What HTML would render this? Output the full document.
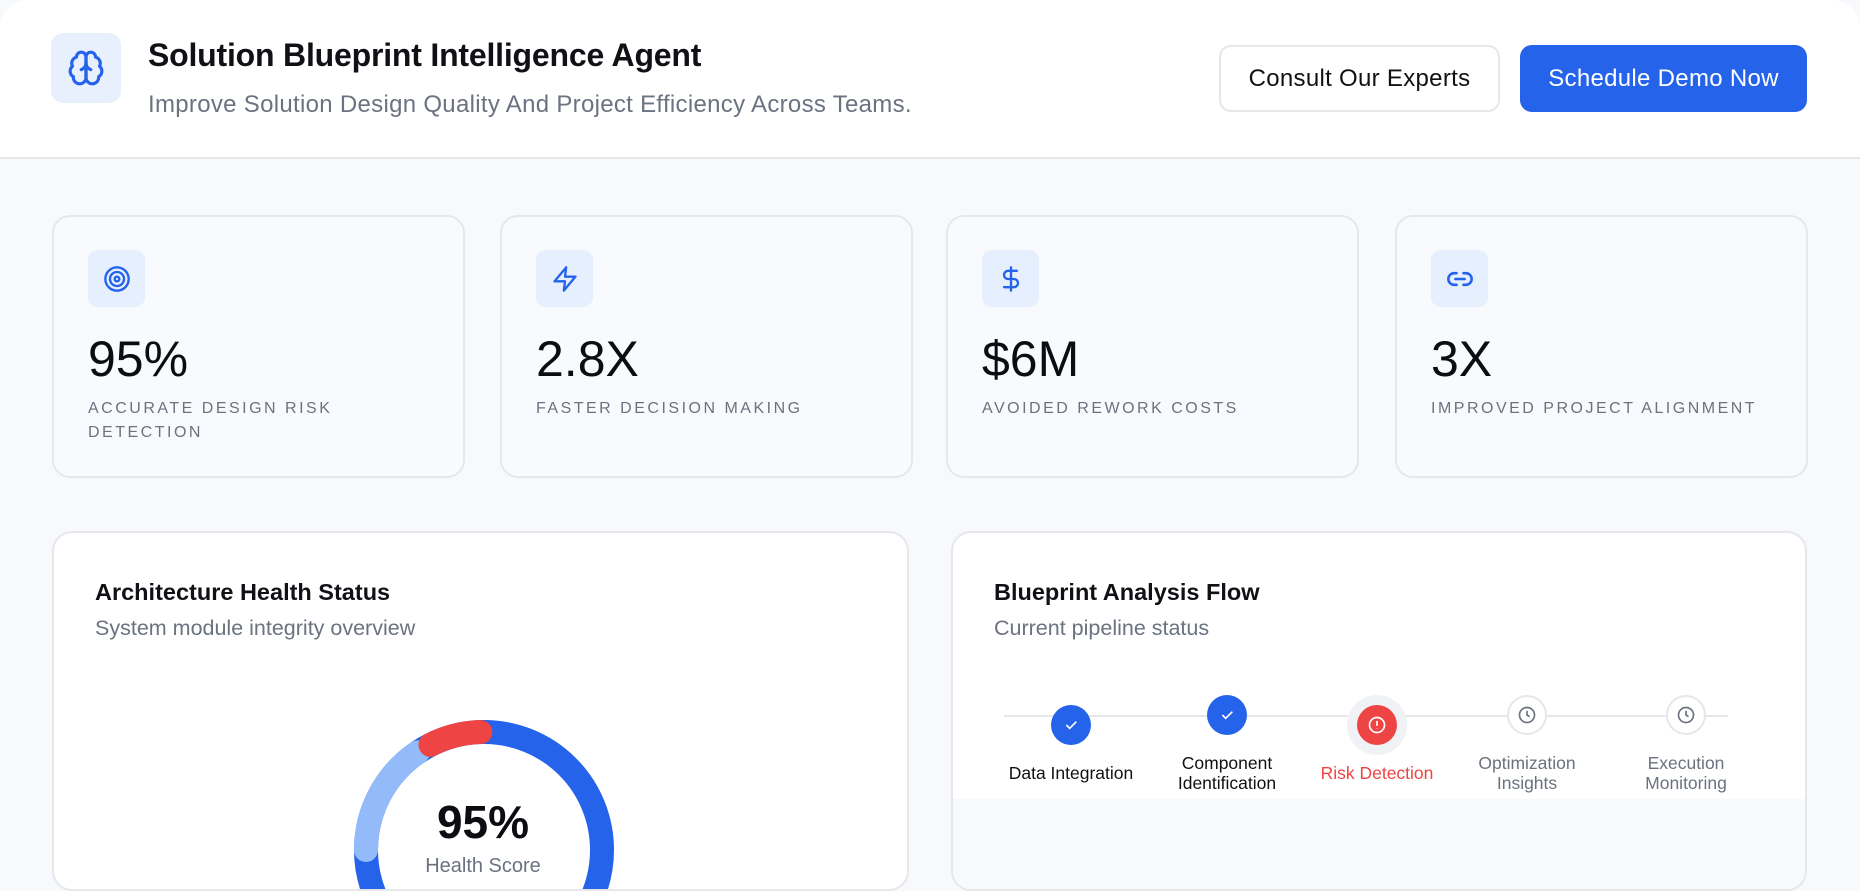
<!DOCTYPE html>
<html><head><meta charset="utf-8"><style>
*{box-sizing:border-box;margin:0;padding:0}
body{width:1860px;height:876px;overflow:hidden;background:#f8f9fc;font-family:"Liberation Sans",sans-serif;position:relative}
.hdr{position:absolute;left:0;top:0;width:1860px;height:159px;background:#fff;border-bottom:2px solid #e5e7eb;border-top-left-radius:28px;border-top-right-radius:28px}
.logo{position:absolute;left:51px;top:33px;width:70px;height:70px;border-radius:12px;background:#e8f0fe;display:flex;align-items:center;justify-content:center}
.t1{position:absolute;left:148px;top:37px;font-size:32px;font-weight:bold;color:#0f1115;letter-spacing:-0.2px}
.t2{position:absolute;left:148px;top:91px;font-size:24px;color:#6b7280;letter-spacing:0.3px}
.btn{position:absolute;top:45px;height:67px;border-radius:12px;font-size:24px;display:flex;align-items:center;justify-content:center;letter-spacing:0.3px}
.b1{left:1219px;width:281px;border:2px solid #e5e7eb;background:#fff;color:#111}
.b2{left:1520px;width:287px;background:#2563eb;color:#fff}
.card{position:absolute;top:215px;height:263px;width:413px;border:2px solid #e5e7eb;border-radius:18px;background:#f9fafd}
.ib{position:absolute;left:34px;top:33px;width:57px;height:57px;border-radius:10px;background:#e6effd;display:flex;align-items:center;justify-content:center}
.num{position:absolute;left:34px;top:113px;font-size:50px;color:#0b0d12}
.lab{position:absolute;left:34px;top:180px;font-size:16px;letter-spacing:2.5px;color:#6b7280;line-height:24px;width:330px}
.big{position:absolute;top:531px;height:360px;border:2px solid #e5e7eb;border-radius:20px;background:#fff;overflow:hidden}
.bt{position:absolute;left:41px;top:46px;font-size:23.5px;font-weight:bold;color:#0f1115}
.bs{position:absolute;left:41px;top:83px;font-size:21.5px;color:#6b7280}
.node{position:absolute;width:40px;height:40px;border-radius:50%;display:flex;align-items:center;justify-content:center}
.nl{position:absolute;width:160px;text-align:center;font-size:17.5px;line-height:20px}
</style></head><body>
<div class="hdr">
<div class="logo"><svg width="38" height="38" viewBox="0 0 24 24" fill="none" stroke="#2563eb" stroke-width="2" stroke-linecap="round" stroke-linejoin="round"><path d="M12 5a3 3 0 1 0-5.997.125 4 4 0 0 0-2.526 5.77 4 4 0 0 0 .556 6.588A4 4 0 1 0 12 18Z"/><path d="M12 5a3 3 0 1 1 5.997.125 4 4 0 0 1 2.526 5.77 4 4 0 0 1-.556 6.588A4 4 0 1 1 12 18Z"/><path d="M12 5v13"/><path d="M9 13a4.5 4.5 0 0 0 3-4"/><path d="M15 13a4.5 4.5 0 0 1-3-4"/></svg></div>
<div class="t1">Solution Blueprint Intelligence Agent</div>
<div class="t2">Improve Solution Design Quality And Project Efficiency Across Teams.</div>
<div class="btn b1">Consult Our Experts</div>
<div class="btn b2">Schedule Demo Now</div>
</div>

<div class="card" style="left:52px"><div class="ib"><svg width="28" height="28" viewBox="0 0 24 24" fill="none" stroke="#2563eb" stroke-width="2"><circle cx="12" cy="12" r="10"/><circle cx="12" cy="12" r="6"/><circle cx="12" cy="12" r="2"/></svg></div><div class="num">95%</div><div class="lab">ACCURATE DESIGN RISK DETECTION</div></div>
<div class="card" style="left:500px"><div class="ib"><svg width="28" height="28" viewBox="0 0 24 24" fill="none" stroke="#2563eb" stroke-width="2" stroke-linejoin="round"><path d="M13 2 3 14h9l-1 8 10-12h-9l1-8z"/></svg></div><div class="num">2.8X</div><div class="lab">FASTER DECISION MAKING</div></div>
<div class="card" style="left:946px"><div class="ib"><svg width="28" height="28" viewBox="0 0 24 24" fill="none" stroke="#2563eb" stroke-width="2" stroke-linecap="round"><path d="M12 2v20"/><path d="M17 5H9.5a3.5 3.5 0 0 0 0 7h5a3.5 3.5 0 0 1 0 7H6"/></svg></div><div class="num">$6M</div><div class="lab">AVOIDED REWORK COSTS</div></div>
<div class="card" style="left:1395px"><div class="ib"><svg width="28" height="28" viewBox="0 0 24 24" fill="none" stroke="#2563eb" stroke-width="2.2" stroke-linecap="round"><path d="M9 17H7A5 5 0 0 1 7 7h2"/><path d="M15 7h2a5 5 0 1 1 0 10h-2"/><path d="M8 12h8"/></svg></div><div class="num">3X</div><div class="lab">IMPROVED PROJECT ALIGNMENT</div></div>

<div class="big" style="left:52px;width:857px">
<div class="bt">Architecture Health Status</div>
<div class="bs">System module integrity overview</div>
<svg style="position:absolute;left:299px;top:186px" width="262" height="262" viewBox="0 0 262 262">
<circle cx="131" cy="131" r="118" fill="none" stroke="#2563eb" stroke-width="24"/>
<circle cx="131" cy="131" r="118" fill="none" stroke="#93bbfa" stroke-width="24" stroke-dasharray="115 1000" transform="rotate(180 131 131)" stroke-linecap="round"/>
<circle cx="131" cy="131" r="118" fill="none" stroke="#ef4444" stroke-width="24" stroke-dasharray="52 1000" transform="rotate(-117 131 131)" stroke-linecap="round"/>
</svg>
<div style="position:absolute;left:329px;top:262px;width:200px;text-align:center;font-size:46px;font-weight:bold;color:#0b0d12">95%</div>
<div style="position:absolute;left:329px;top:322px;width:200px;text-align:center;font-size:20px;color:#6b7280">Health Score</div>
</div>

<div class="big" style="left:951px;width:856px">
<div style="position:absolute;left:0;top:266px;width:856px;height:120px;background:#f8f9fd"></div>
<div class="bt">Blueprint Analysis Flow</div>
<div class="bs">Current pipeline status</div>
<div style="position:absolute;left:51px;top:182px;width:724px;height:2px;background:#e5e7eb"></div>
<div class="node" style="left:98px;top:172px;background:#2563eb"><svg width="16" height="16" viewBox="0 0 24 24" fill="none" stroke="#fff" stroke-width="2.5"><path d="M5 12l5 5L20 7"/></svg></div>
<div class="node" style="left:254px;top:162px;background:#2563eb"><svg width="16" height="16" viewBox="0 0 24 24" fill="none" stroke="#fff" stroke-width="2.5"><path d="M5 12l5 5L20 7"/></svg></div>
<div class="node" style="left:394px;top:162px;width:60px;height:60px;background:#f1f2f5"><div class="node" style="left:10px;top:10px;background:#ef4444"><svg width="20" height="20" viewBox="0 0 24 24" fill="none" stroke="#fff" stroke-width="2"><circle cx="12" cy="12" r="9"/><path d="M12 7v6M12 16v.5"/></svg></div></div>
<div class="node" style="left:554px;top:162px;background:#fff;border:2px solid #e5e7eb"><svg width="20" height="20" viewBox="0 0 24 24" fill="none" stroke="#6b7280" stroke-width="2"><circle cx="12" cy="12" r="9"/><path d="M12 7v5l3 2"/></svg></div>
<div class="node" style="left:713px;top:162px;background:#fff;border:2px solid #e5e7eb"><svg width="20" height="20" viewBox="0 0 24 24" fill="none" stroke="#6b7280" stroke-width="2"><circle cx="12" cy="12" r="9"/><path d="M12 7v5l3 2"/></svg></div>
<div class="nl" style="left:38px;top:230px;color:#111">Data Integration</div>
<div class="nl" style="left:194px;top:220px;color:#111">Component<br>Identification</div>
<div class="nl" style="left:344px;top:230px;color:#ef4444">Risk Detection</div>
<div class="nl" style="left:494px;top:220px;color:#6b7280">Optimization<br>Insights</div>
<div class="nl" style="left:653px;top:220px;color:#6b7280">Execution<br>Monitoring</div>
</div>
</body></html>
